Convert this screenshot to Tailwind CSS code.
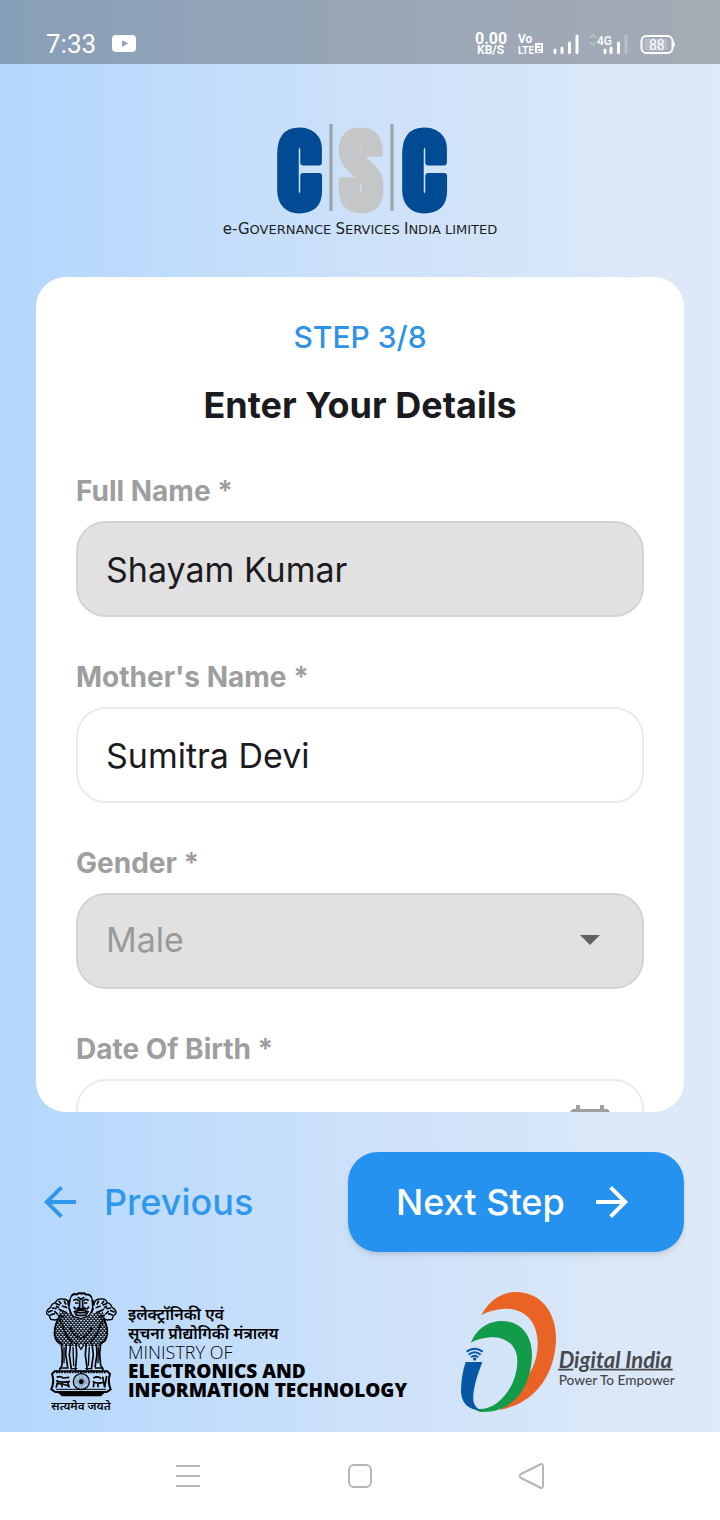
<!DOCTYPE html>
<html lang="en">
<head>
    <meta charset="UTF-8">
    <meta name="viewport" content="width=device-width, initial-scale=1.0">
    <title>CSC Registration - Enter Your Details</title>
    <script src="https://cdn.jsdelivr.net/npm/@tailwindcss/browser@4"></script>
</head>
<body class="bg-white font-['Inter',sans-serif] text-[#1b1b1f]">
    <div class="flex h-screen flex-col">
        <div class="flex min-h-0 flex-1 flex-col bg-linear-to-r from-[#b3d7fd] via-[#cde1f9] to-[#dfeaf8]">

            <!-- Status bar -->
            <header class="flex h-16 shrink-0 items-end justify-between bg-[#2e2e2e]/33 pr-11 pb-2 pl-[46px] text-white">
                <div class="flex items-center gap-4">
                    <span class="font-['Roboto',sans-serif] text-[26px] leading-6">7:33</span>
                    <svg class="h-6 w-6" viewBox="0 0 24 24" aria-label="YouTube">
                        <rect x="0" y="3" width="24" height="17" rx="4" fill="#fff"/>
                        <path d="M10 8.300l6.200 3.200-6.200 3.200z" fill="#8ea2ba"/>
                    </svg>
                </div>
                <svg class="h-7 w-[202px]" viewBox="0 0 202 28" font-family="Roboto, sans-serif" fill="#fff" aria-label="Signal and battery">
                    <text x="1" y="16" font-size="16" font-weight="700">0.00</text>
                    <text x="3" y="26" font-size="12" font-weight="700">KB/S</text>
                    <text x="44" y="15" font-size="12" font-weight="700">Vo</text>
                    <text x="44" y="26" font-size="10" font-weight="700">LTE</text>
                    <path d="M61 15h8v10h-8zM63 17v1h3v2h-3v4h4v-1h-3v-2h3v-4z" fill-rule="evenodd"/>
                    <g stroke="#fff" stroke-width="3" stroke-linecap="round">
                        <path d="M81 22v2.500M88 20v4.500M95.500 15v9.500M103 8v16.500"/>
                        <path d="M131 22v2.500M137 20v4.500M144.500 15v9.500"/>
                        <path d="M152 8v16.500" opacity=".25"/>
                    </g>
                    <path d="M116 10l3-3 3 3M116 14l3 3 3-3" fill="none" stroke="#fff" stroke-width="1.500" opacity=".3"/>
                    <text x="123" y="17" font-size="12" font-weight="500">4G</text>
                    <rect x="167.500" y="8" width="31" height="17" rx="5" fill="none" stroke="#fff" stroke-width="2"/>
                    <path d="M199 13q4 3.500 0 7z"/>
                    <rect x="170.500" y="10.500" width="23" height="12" rx="2" opacity=".2"/>
                    <text x="175" y="21.500" font-size="14">88</text>
                </svg>
            </header>

            <!-- Brand -->
            <div class="flex h-[213px] shrink-0 justify-center pt-14">
                <svg class="h-[120px] w-[320px]" viewBox="0 0 320 120" role="img" aria-label="CSC e-Governance Services India Limited">
                    <g font-family="Impact, Anton, 'Roboto Condensed', 'Open Sans Condensed', 'Noto Sans ExtraCondensed', 'Noto Sans Condensed', 'Liberation Sans Narrow', 'DejaVu Sans Condensed', sans-serif" font-weight="900" font-size="92" text-anchor="middle" stroke-width="3" stroke-linejoin="round">
                        <text x="99" y="90" fill="#004b93" stroke="#004b93">C</text>
                        <text x="161" y="90" fill="#c4c6c8" stroke="#c4c6c8">S</text>
                        <text x="224" y="90" fill="#004b93" stroke="#004b93">C</text>
                    </g>
                    <path d="M131 4v87M192 4v87" stroke="#9ba1a9" stroke-width="3"/>
                    <text x="160" y="114" text-anchor="middle" font-family="'DejaVu Sans', sans-serif" font-size="13" fill="#1c1f24"><tspan font-size="15">e-G</tspan>OVERNANCE <tspan font-size="15">S</tspan>ERVICES <tspan font-size="15">I</tspan>NDIA LIMITED</text>
                </svg>
            </div>

            <!-- Form card -->
            <main class="mx-9 min-h-0 flex-1 overflow-y-auto rounded-[30px] bg-white px-10 pt-10 pb-10 [scrollbar-width:none]">
                <p class="text-center text-[30px] leading-10 font-medium text-[#2e93e8]">STEP 3/8</p>
                <h1 class="mt-6 text-center text-4xl leading-[48px] font-bold">Enter Your Details</h1>

                <form id="detailsForm" class="mt-[42px] flex flex-col gap-10">
                    <div>
                        <label for="fullName" class="mb-[10px] block text-[28px] leading-10 font-bold text-[#9e9e9e]">Full Name *</label>
                        <input type="text" id="fullName" value="Shayam Kumar" readonly class="block h-24 w-full rounded-[30px] border-2 border-[#d3d3d3] bg-[#e1e1e1] px-7 text-[34px] outline-none">
                    </div>
                    <div>
                        <label for="motherName" class="mb-[10px] block text-[28px] leading-10 font-bold text-[#9e9e9e]">Mother's Name *</label>
                        <input type="text" id="motherName" value="Sumitra Devi" class="block h-24 w-full rounded-[30px] border-2 border-[#ebebeb] bg-white px-7 text-[34px] outline-none">
                    </div>
                    <div>
                        <label for="gender" class="mb-[10px] block text-[28px] leading-10 font-bold text-[#9e9e9e]">Gender *</label>
                        <div class="grid items-center">
                            <select id="gender" disabled class="col-start-1 row-start-1 h-24 w-full appearance-none rounded-[30px] border-2 border-[#d3d3d3] bg-[#e1e1e1] px-7 pb-1 text-[34px] text-[#9a9a9a] opacity-100">
                                <option>Male</option>
                                <option>Female</option>
                                <option>Transgender</option>
                            </select>
                            <svg class="pointer-events-none col-start-1 row-start-1 mr-[30px] mb-1 h-12 w-12 justify-self-end" viewBox="0 0 24 24" fill="#616161"><path d="M7 10l5 5 5-5z"/></svg>
                        </div>
                    </div>
                    <div>
                        <label for="dob" class="mb-[10px] block text-[28px] leading-10 font-bold text-[#9e9e9e]">Date Of Birth *</label>
                        <div class="grid items-center">
                            <input type="text" id="dob" class="col-start-1 row-start-1 h-24 w-full rounded-[30px] border-2 border-[#ebebeb] bg-white px-7 text-[34px] outline-none">
                            <svg class="pointer-events-none col-start-1 row-start-1 mr-[30px] h-12 w-12 justify-self-end" viewBox="0 0 24 24" fill="#9e9e9e"><path d="M20 3h-1V1h-2v2H7V1H5v2H4c-1.100 0-2 .9-2 2v16c0 1.100.9 2 2 2h16c1.100 0 2-.9 2-2V5c0-1.100-.9-2-2-2zm0 18H4V8h16v13z"/></svg>
                        </div>
                    </div>
                </form>
            </main>

            <!-- Step navigation -->
            <div class="mx-9 mt-10 flex shrink-0 items-center justify-between">
                <button type="button" class="flex h-[100px] items-center gap-5 text-4xl font-medium text-[#2e98ec]">
                    <svg class="h-12 w-12" viewBox="0 0 24 24" fill="currentColor"><path d="M20 11H7.830l5.590-5.590L12 4l-8 8 8 8 1.410-1.410L7.830 13H20v-2z"/></svg>
                    Previous
                </button>
                <button type="submit" form="detailsForm" class="flex h-[100px] w-[336px] items-center justify-between rounded-[30px] bg-[#2592ef] px-12 text-4xl font-medium text-white shadow-md">
                    Next Step
                    <svg class="h-12 w-12" viewBox="0 0 24 24" fill="currentColor"><path d="M12 4l-1.410 1.410L16.170 11H4v2h12.170l-5.580 5.590L12 20l8-8z"/></svg>
                </button>
            </div>

            <!-- Partner logos -->
            <footer class="mx-9 mt-7 flex h-[152px] shrink-0 justify-between">
                <div class="flex">
                    <svg class="h-[145px] w-[90px]" viewBox="0 0 270 435" fill="none" stroke="#000" stroke-width="4" role="img" aria-label="State Emblem of India">
                        <defs>
                            <pattern id="mane" width="10" height="12" patternUnits="userSpaceOnUse">
                                <path d="M0 0q1 6 5 7q4-1 5-7M-5 6q1 6 5 7q4-1 5-7M5 6q1 6 5 7q4-1 5-7" stroke="#000" stroke-width="3" fill="none"/>
                            </pattern>
                        </defs>
                        <!-- centre lion -->
                        <path d="M103 55q3-12 18-12l14-4 16 4q16 2 17 14l2 25q-4 20-16 28l-20 6-20-6q-14-10-15-30z"/>
                        <path d="M106 48q8-10 16-4q7-9 14-2q8-7 14 2q10-4 16 7M101 60q-8 8-2 18M169 60q8 8 3 18M99 84l6 16M172 84l-6 16" stroke-width="5"/>
                        <path d="M112 62q8-8 16 0M142 62q8-8 16 0M117 69h10M144 69h10M131 60v20l-7 6h24l-8-6V60M115 95q20-9 41 0l-7 11h-27zM120 98h31M113 80l6 8M159 80l-7 8M125 52l10 6 10-6" stroke-width="5"/>
                        <!-- side lions -->
                        <path d="M98 70q-2-13-18-13q-16-3-21 10q-12 4-15 15q-14 8-12 19l8 6 4 11 14 2 12-4q8 8 2 18M175 70q2-13 18-13q16-3 20 10q12 4 15 15q14 8 12 19l-8 6-4 11-14 2-12-4q-8 8-2 18"/>
                        <path d="M58 70l14 6M48 84l14 2M36 97l14-6M42 105l15-4M55 93l10 10M68 62l8 10M78 78l16 5M68 88l25 10M65 106l20 5M84 62l6 12M60 78l9 6M214 70l-14 6M225 84l-14 2M236 97l-14-6M230 105l-14-4M218 93l-10 10M204 62l-7 10M194 78l-15 5M204 88l-24 10M207 106l-20 5M188 62l-5 12M213 78l-9 6" stroke-width="5"/>
                        <!-- manes -->
                        <path d="M72 94l28 6 16 12 20 6 20-6 16-12 28-6 10 30 4 40q-8 26-24 34l-26 0-28-3-30 3-30-1q-22-12-24-36l6-30z" fill="url(#mane)" stroke="none"/>
                        <path d="M66 118q-16 30-7 56q4 14 20 16M204 118q16 30 7 56q-4 14-20 16M78 128q8 40 32 60M194 128q-8 40-32 60" stroke-width="5"/>
                        <path d="M102 142q12 26 32 34q22-8 34-34" stroke-width="7" stroke-dasharray="7 4"/>
                        <!-- legs -->
                        <path d="M76 190l3 32-1 34-8 14M91 192l-2 30 6 40M104 190l-4 34 6 44M120 188l2 36-4 46M151 188l-3 36 6 46M168 190l4 34-6 44M181 192l2 30-6 40M194 190l-3 32 3 34 8 14" stroke-width="5"/>
                        <path d="M84 200v50M111 200l2 58M160 200l-3 58M187 200l-1 50M126 194l9 14 9-14M72 264h26M104 266h20M148 266h20M176 264h26" stroke-width="4"/>
                        <!-- abacus -->
                        <path d="M56 274h158l8 8q-8 22 2 46l-12 8H58l-12-8q10-24 2-46z" stroke-width="6"/>
                        <path d="M60 276h152" stroke-width="8" stroke-dasharray="5 3"/>
                        <path d="M60 328h150" stroke-width="3"/>
                        <circle cx="136" cy="305" r="24" stroke-width="4"/>
                        <circle cx="136" cy="305" r="5" fill="#000"/>
                        <path d="M136 283v44M114 305h44M120 289l32 32M152 289l-32 32M128 285l16 40M144 285l-16 40M116 297l40 16M116 313l40-16" stroke-width="1"/>
                        <path d="M62 292q10-5 20 2l18-2M60 302q22 8 42 2M66 306l-6 17M78 306v16M94 306l6 16M60 312q16-3 38 6M172 294q14-8 24 2M170 304q16 10 34 2M174 308l-2 14M186 310v12M200 290l6 32M212 288l-6 34" stroke-width="5"/>
                        <path d="M70 339h132l-8 8H78z" fill="#000"/>
                        <path d="M66 337h140" stroke-width="5" stroke-dasharray="7 3"/>
                        <text x="135" y="391" text-anchor="middle" font-family="'Noto Sans', 'Noto Sans Devanagari', sans-serif" font-size="35" font-weight="600" fill="#000" stroke="none">सत्यमेव जयते</text>
                    </svg>
                    <div class="ml-[2px] pt-[25px] font-['Open_Sans','Noto_Sans',sans-serif] text-[19px] leading-[19px] whitespace-nowrap text-black">
                        <p lang="hi" class="text-base leading-[19px] font-semibold">इलेक्ट्रॉनिकी एवं</p>
                        <p lang="hi" class="text-base leading-[19px] font-semibold">सूचना प्रौद्योगिकी मंत्रालय</p>
                        <p class="text-lg leading-[19px] font-light">MINISTRY OF</p>
                        <p class="font-extrabold">ELECTRONICS AND</p>
                        <p class="font-extrabold">INFORMATION TECHNOLOGY</p>
                    </div>
                </div>
                <svg class="h-[145px] w-[234px] shrink-0" viewBox="0 0 702 435" role="img" aria-label="Digital India">
                    <path d="M94 105Q130 40 195 36C270 34 320 95 318 180C314 290 250 372 150 389L185 340C245 290 264 240 263 185C260 115 215 85 165 86Q125 88 94 105z" fill="#e96424"/>
                    <path d="M62 188Q90 126 152 123C212 122 246 165 246 225C244 310 200 394 100 396Q84 396 72 386Q110 392 140 370C185 335 202 285 202 240C200 190 160 168 120 172Q88 175 62 188z" fill="#129b48"/>
                    <path d="M47 246h50C80 290 68 330 70 362Q74 384 95 391C50 390 33 365 33 330Q34 285 47 246z" fill="#0657a5"/>
                    <g fill="none" stroke="#0657a5" stroke-width="6">
                        <path d="M50 215q24-18 48 0M56 224q18-14 36 0M63 232q11-9 22 0"/>
                    </g>
                    <circle cx="74" cy="237" r="5" fill="#0657a5"/>
                    <g font-family="Lato, sans-serif" fill="#47494c">
                        <text x="326" y="263" font-size="66" font-weight="700" font-style="italic">Digital India</text>
                        <path d="M324 269h46M420 269h248" stroke="#47494c" stroke-width="5"/>
                        <text x="326" y="314" font-size="41" font-weight="500">Power To Empower</text>
                    </g>
                </svg>
            </footer>
        </div>

        <!-- System navigation -->
        <nav class="flex h-[88px] shrink-0 items-center justify-around bg-white px-[102px]">
            <button type="button" aria-label="Recent apps"><svg class="h-8 w-8" viewBox="0 0 32 32" fill="none" stroke="#b5b5b5" stroke-width="2"><path d="M4 6h24M4 16h24M4 26h24"/></svg></button>
            <button type="button" aria-label="Home"><svg class="h-8 w-8" viewBox="0 0 32 32" fill="none" stroke="#b5b5b5" stroke-width="2"><rect x="5" y="5" width="22" height="22" rx="5"/></svg></button>
            <button type="button" aria-label="Back"><svg class="h-8 w-8" viewBox="0 0 32 32" fill="none" stroke="#b5b5b5" stroke-width="2" stroke-linejoin="round"><path d="M24 4.500q3-1.500 3 2v19q0 3.500-3 2L5 18q-3-2 0-4z"/></svg></button>
        </nav>
    </div>
</body>
</html>
